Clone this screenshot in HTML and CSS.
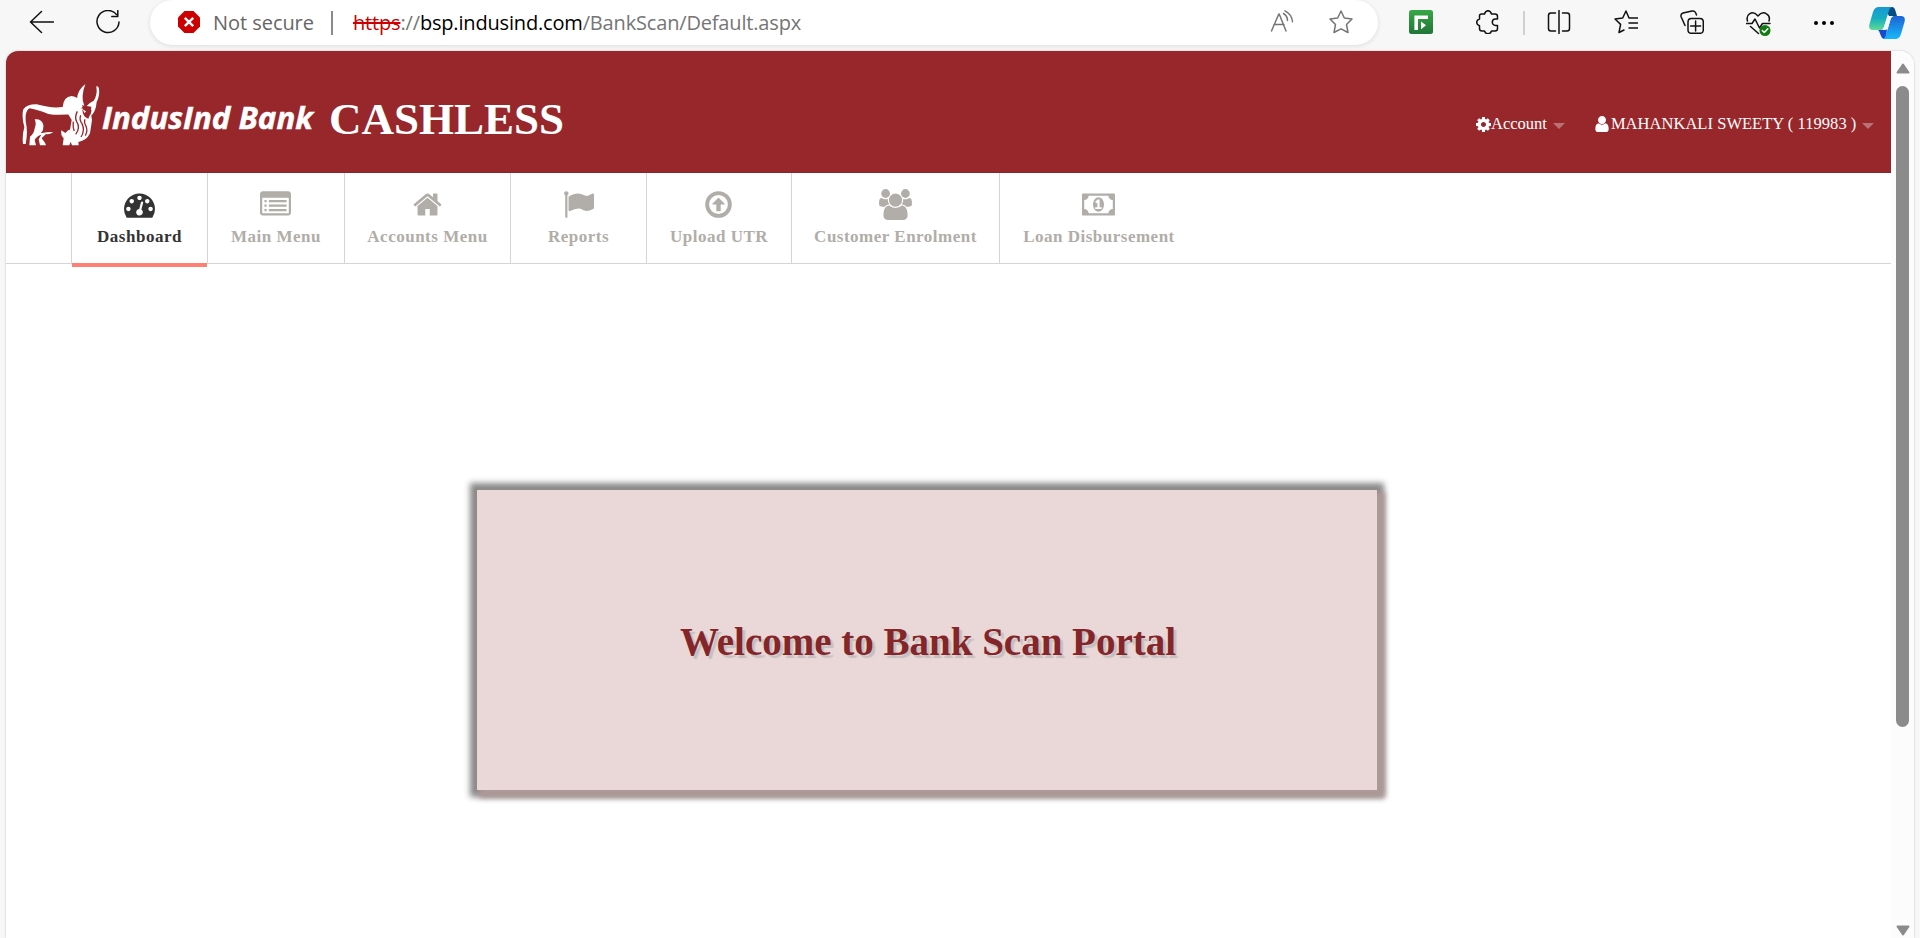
FILE: index.html
```html
<!DOCTYPE html>
<html lang="en">
<head>
<meta charset="utf-8">
<title>Bank Scan Portal</title>
<link rel="stylesheet" href="styles.css">
</head>
<body>
<div class="browser">
  <div class="toolbar">
    <svg class="tool back" viewBox="0 0 24 24"><path d="M12 1.500L1 12l11 10.500M1 12h23"/></svg>
    <svg class="tool reload" viewBox="0 0 24 24"><path d="M20.500 4.500A11 11 0 1 0 23 12M21.800.500v6h-6"/></svg>
    <div class="address">
      <svg class="warning" viewBox="0 0 22 22"><path fill="#c00" d="M6.500 0h9L22 6.500v9L15.500 22h-9L0 15.500v-9z"/><path stroke="#fff" stroke-width="2.400" d="M6.800 6.800l8.400 8.400m0-8.400l-8.400 8.400"/></svg>
      <span class="insecure">Not secure</span>
      <span class="address-rule"></span>
      <span class="url"><span class="scheme">https</span>://<span class="host">bsp.indusind.com</span>/BankScan/Default.aspx</span>
      <svg class="tool grey read" viewBox="0 0 24 24"><path d="M1.500 21L8.800 4h.400L16 21M4 14.500h10M13.500 3.500q4 2.500 4 7M15 .800q7 3.500 7.500 11"/></svg>
      <svg class="tool grey star" viewBox="0 0 24 24"><path d="M12 1l3.300 7 7.700 1-5.500 5.500L19 22.500l-7-3.700-7 3.700 1.500-8L1 9l7.700-1z"/></svg>
    </div>
    <svg class="tool ext" viewBox="0 0 24 24"><defs><linearGradient id="g" x2="0" y2="1"><stop stop-color="#36a846"/><stop offset="1" stop-color="#217538"/></linearGradient></defs><rect width="24" height="24" rx="2.500" fill="url(#g)" stroke="none"/><path d="M7.200 20V7.200H19" stroke="#fff" stroke-width="3.600"/><path d="M12 11.500l5 3.700-5 4z" fill="#fff" stroke="none"/></svg>
    <svg class="tool puzzle" viewBox="0 0 24 24"><path d="M5.500 4H8.500q1-3.300 3.500-3.300T15.500 4H19q2.500 0 2.500 2.500V9h-2a3.200 3.200 0 0 0 0 6.400h2V18.500q0 2.500-2.500 2.500H15.500q-1 2.800-3.500 2.800T8.500 21H6q-2.500 0-2.500-2.500V15.800Q.700 15 .700 12.300T3.500 9V6q0-2 2-2z"/></svg>
    <span class="tool-rule"></span>
    <svg class="tool split" viewBox="0 0 24 24"><path d="M8.500 3H4Q1.500 3 1.500 5.500v13Q1.500 21 4 21h4.500M12 .500v23M15.500 3H20q2.500 0 2.500 2.500v13Q22.500 21 20 21h-4.500"/></svg>
    <svg class="tool favs" viewBox="0 0 24 24"><path d="M15 8L12 1 8.700 8 1 9l5.600 5.400L5 22.500l5-2.500M15 8h9M15 13h9M15 18h9"/></svg>
    <svg class="tool coll" viewBox="0 0 24 24"><path d="M5 15.500L1 6.500Q.500 4 3 3l9-2q2.500-.500 3.500 1.500l1 2.500M8 12q0-3.500 3.500-3.500h8.500q3.300 0 3.300 3.500v8q0 3.300-3.300 3.300h-8.500Q8 23.300 8 20zM15.600 11v10M10.600 16h10"/></svg>
    <svg class="tool heart" viewBox="0 0 25 25"><path d="M1.500 10Q0 5 3.500 2.800 8 0 12 5q4-5 8.500-2.200Q24.500 5 23 10M0 12.500h6l3-4.500 4.500 9 3-4.500H24M4.500 15.500l8 7"/><circle cx="19" cy="19.500" r="5.500" fill="#107c10" stroke="none"/><path stroke="#fff" d="M16.300 19.500l2 2 3.500-3.700"/></svg>
    <svg class="tool dots" viewBox="0 0 24 24"><g fill="#000" stroke="none"><circle cx="4" cy="12" r="2"/><circle cx="12" cy="12" r="2"/><circle cx="20" cy="12" r="2"/></g></svg>
    <svg class="copilot" viewBox="0 0 36 32"><defs><linearGradient id="c1" x2="0" y2="1"><stop stop-color="#1797d4"/><stop offset=".5" stop-color="#16afc2"/><stop offset="1" stop-color="#61d995"/></linearGradient><linearGradient id="c2" x2="0" y2="1"><stop stop-color="#1d62d3"/><stop offset="1" stop-color="#18b8fa"/></linearGradient></defs><path fill="#064c84" d="M15 0h8q2.500 0 3.500 4l1.500 5h-8z"/><path fill="#164bcd" d="M8 22h10l-1 10h-2q-2 0-3-3l-2-5z"/><path fill="url(#c1)" d="M10 0h13q-2.500 1-3.500 5l-4.500 15q-1 3-4 3H4q-5 0-3.500-6L4 5q1.500-5 6-5z"/><path fill="url(#c2)" d="M25 9h7q5 0 3.500 6L32 27q-1.500 5-5.500 5H14q2-1 3-4l4.500-15.500Q22.500 9 25 9z"/><path fill="#f7f7f7" d="M18.500 9H25q-2.500 0-3.500 3.500L19 21q-.700 2-3 2h-5q3 0 4-3z"/></svg>
  </div>

  <div class="window">
    <div class="page">
      <header class="header">
        <svg class="logo" viewBox="0 0 300 66" role="img" aria-label="IndusInd Bank">
          <g transform="translate(-12 -13) scale(.33333)">
            <g fill="#fff">
              <path d="M39 222Q36 195 43 172 34 138 40 118 52 102 80 103 125 116 158 111 160 80 185 78q20 4 27 17l6 15-18 20q-50 8-85 2Q80 118 58 115 43 125 48 160q6 25-1 62z"/>
              <path d="M74 148q22-2 26 17 2 15-8 25 18-4 38-4-8 8-22 6l-13 13 10 13 3 8H90l-4-18 8-14q-14 4-20 16l4 16H58l2-26q12-8 14-25 6-15 0-27z"/>
              <path d="M154 181l12 8q9-11 14-10l5-29-12-20 42-15q31 10 31 35-2 15-6 40-10 22-35 26l1 10h-20l-4-11-4 11h-20l3-21q-10-10-7-24z"/>
              <path d="M226 42Q203 60 201 86q5 19 22 21Q211 82 226 42z"/>
              <path d="M259 49q4 27-8 43-13 6-21 16l14 2-3 30q17-15 19-44 10-20 7-40-2-9-8-7z"/>
            </g>
            <path fill="#97272b" d="M217 119q20-9 28 3l-10 24q-17-6-18-27z"/>
            <path fill="#fff" d="M219 120q7 0 9 5l-5 4z"/>
            <path fill="none" stroke="#97272b" stroke-width="4" d="M202 124q-9 18-2 31 12 19-3 38M212 136q-5 14 4 25 10 20-3 40M225 148q-4 8 3 20 6 15-2 29M190 155q-2 18 3 28"/>
          </g>
          <text class="wordmark" x="80" y="45.500" textLength="211" lengthAdjust="spacingAndGlyphs">IndusInd Bank</text>
        </svg>
        <h1 class="product">CASHLESS</h1>
        <div class="account">
          <svg class="fa" viewBox="128 128 1536 1536"><path d="M1152 896q0-106-75-181t-181-75-181 75-75 181 75 181 181 75 181-75 75-181zm512-109v222q0 12-8 23t-20 13l-185 28q-19 54-39 91 35 50 107 138 10 12 10 25t-9 23q-27 37-99 108t-94 71q-12 0-26-9l-138-108q-44 23-91 38-16 136-29 186-7 28-36 28h-222q-14 0-24.500-8.500t-11.500-21.500l-28-184q-49-16-90-37l-141 107q-10 9-25 9-14 0-25-11-126-114-165-168-7-10-7-23 0-12 8-23 15-21 51-66.500t54-70.500q-27-50-41-99l-183-27q-13-2-21-12.500t-8-23.500v-222q0-12 8-23t19-13l186-28q14-46 39-92-40-57-107-138-10-12-10-24 0-10 9-23 26-36 98.500-107.500t94.500-71.500q13 0 26 10l138 107q44-23 91-38 16-136 29-186 7-28 36-28h222q14 0 24.500 8.500t11.500 21.500l28 184q49 16 90 37l142-107q9-9 24-9 13 0 25 10 129 119 165 170 7 8 7 22 0 12-8 23-15 21-51 66.500t-54 70.500q26 50 41 98l183 28q13 2 21 12.500t8 23.500z"/></svg>
          <span>Account</span><i class="caret"></i>
        </div>
        <div class="user">
          <svg class="fa person" viewBox="256 128 1280 1536"><path d="M1536 1399q0 109-62.500 187t-150.500 78h-854q-88 0-150.500-78t-62.500-187q0-85 8.500-160.500t31.500-152 58.500-131 94-89 134.500-34.500q131 128 313 128t313-128q76 0 134.500 34.500t94 89 58.500 131 31.500 152 8.500 160.500zm-256-887q0 159-112.500 271.500t-271.500 112.500-271.500-112.500-112.500-271.500 112.500-271.500 271.500-112.500 271.500 112.500 112.500 271.500z"/></svg>
          <span>MAHANKALI SWEETY ( 119983 )</span><i class="caret"></i>
        </div>
      </header>

      <nav class="nav">
        <a class="item dashboard active"><svg viewBox="0 0 1792 1792"><path d="M384 1152q0-53-37.500-90.500t-90.500-37.500-90.500 37.500-37.500 90.500 37.500 90.500 90.500 37.500 90.500-37.500 37.500-90.500zm192-448q0-53-37.500-90.500t-90.500-37.500-90.500 37.500-37.500 90.500 37.500 90.500 90.500 37.500 90.500-37.500 37.500-90.500zm428 481l101-382q6-26-7.500-48.500t-38.500-29.500-48 6.500-30 39.500l-101 382q-60 5-107 43.500t-63 98.500q-20 77 20 146t117 89 146-20 89-117q16-60-6-117t-72-91zm660-33q0-53-37.500-90.500t-90.500-37.500-90.500 37.500-37.500 90.500 37.500 90.500 90.500 37.500 90.500-37.500 37.500-90.500zm-640-640q0-53-37.500-90.500t-90.500-37.500-90.500 37.500-37.500 90.500 37.500 90.500 90.500 37.500 90.500-37.500 37.500-90.500zm448 192q0-53-37.500-90.500t-90.500-37.500-90.500 37.500-37.500 90.500 37.500 90.500 90.500 37.500 90.500-37.500 37.500-90.500zm320 448q0 261-141 483-19 29-54 29h-1402q-35 0-54-29-141-221-141-483 0-182 71-348t191-286 286-191 348-71 348 71 286 191 191 286 71 348z"/></svg><span>Dashboard</span></a>
        <a class="item main"><svg viewBox="0 0 1792 1792"><path fill-rule="evenodd" d="M160 128h1472q66 0 113 47t47 113v1088q0 66-47 113t-113 47H160q-66 0-113-47T0 1376V288q0-66 47-113t113-47zm0 384q-32 0-32 32v832q0 32 32 32h1472q32 0 32-32V544q0-32-32-32z"/><path d="M256 640h128v128H256zM256 896h128v128H256zM256 1152h128v128H256zM512 640h1024v128H512zM512 896h1024v128H512zM512 1152h1024v128H512z"/></svg><span>Main Menu</span></a>
        <a class="item accounts"><svg viewBox="0 0 1792 1792"><path d="M1472 992v480q0 26-19 45t-45 19h-384v-384h-256v384h-384q-26 0-45-19t-19-45v-480q0-1 .5-3t.5-3l575-474 575 474q1 2 1 6zm223-69l-62 74q-8 9-21 11h-3q-13 0-21-7l-692-577-692 577q-12 8-24 7-13-2-21-11l-62-74q-8-10-7-23.500t11-21.500l719-599q32-26 76-26t76 26l244 204v-195q0-14 9-23t23-9h192q14 0 23 9t9 23v408l219 182q10 8 11 21.500t-7 23.500z"/></svg><span>Accounts Menu</span></a>
        <a class="item reports"><svg viewBox="0 0 1792 1792"><path d="M320 256q0 72-64 110v1266q0 13-9.500 22.500t-22.500 9.500h-64q-13 0-22.500-9.500t-9.500-22.500v-1266q-64-38-64-110 0-53 37.500-90.500t90.500-37.500 90.500 37.500 37.500 90.500zm1472 64v763q0 25-12.500 38.500t-39.500 27.500q-215 116-369 116-61 0-123.500-22t-108.500-48-115.500-48-142.500-22q-192 0-464 146-17 9-33 9-26 0-45-19t-19-45v-742q0-32 31-55 21-14 79-43 236-120 421-120 107 0 200 29t219 88q38 19 88 19 54 0 117.500-21t110-47 88-47 54.500-21q26 0 45 19t19 45z"/></svg><span>Reports</span></a>
        <a class="item upload"><svg viewBox="0 0 1792 1792"><path fill-rule="evenodd" d="M896 128a768 768 0 1 1 0 1536 768 768 0 0 1 0-1536zm0 224a544 544 0 1 0 0 1088 544 544 0 0 0 0-1088z"/><path d="M896 510q14 0 24 10l320 320q15 17 8 35t-30 21h-194v352q0 32-32 32H800q-32 0-32-32V896H576q-23-2-31-20t7-35l320-321q10-10 24-10z"/></svg><span>Upload UTR</span></a>
        <a class="item customer"><svg class="wide" viewBox="64 0 1920 1792"><path d="M657 896q-162 5-265 128h-134q-82 0-138-40.500t-56-118.500q0-353 124-353 6 0 43.500 21t97.500 42.500 119 21.500q67 0 133-23-5 37-5 66 0 139 81 256zm1071 637q0 120-73 189.500t-194 69.500h-874q-121 0-194-69.500t-73-189.500q0-53 3.500-103.500t14-109 26.500-108.500 43-97.500 62-81 85.500-53.500 111.500-20q10 0 43 21.500t73 48 107 48 135 21.500 135-21.500 107-48 73-48 43-21.500q61 0 111.500 20t85.500 53.500 62 81 43 97.500 26.500 108.500 14 109 3.500 103.500zm-1024-1277q0 106-75 181t-181 75-181-75-75-181 75-181 181-75 181 75 75 181zm704 384q0 159-112.500 271.500t-271.500 112.500-271.500-112.500-112.500-271.500 112.500-271.500 271.500-112.500 271.500 112.500 112.500 271.500zm576 225q0 78-56 118.500t-138 40.500h-134q-103-123-265-128 81-117 81-256 0-29-5-66 66 23 133 23 59 0 119-21.500t97.500-42.500 43.500-21q124 0 124 353zm-128-609q0 106-75 181t-181 75-181-75-75-181 75-181 181-75 181 75 75 181z"/></svg><span>Customer Enrolment</span></a>
        <a class="item loan"><svg class="wide" viewBox="0 0 1920 1792"><path d="M768 1152h384v-96h-128v-448h-114l-148 137 77 80q42-37 55-57h2v288h-128v96zm512-256q0 70-21 142t-59.500 134-101.500 101-138 39-138-39-101.500-101-59.500-134-21-142 21-142 59.500-134 101.500-101 138-39 138 39 101.500 101 59.500 134 21 142zm512 256v-512q-106 0-181-75t-75-181h-1152q0 106-75 181t-181 75v512q106 0 181 75t75 181h1152q0-106 75-181t181-75zm128-832v1152q0 26-19 45t-45 19h-1792q-26 0-45-19t-19-45v-1152q0-26 19-45t45-19h1792q26 0 45 19t19 45z"/></svg><span>Loan Disbursement</span></a>
      </nav>

      <main class="content">
        <section class="welcome"><h2>Welcome to Bank Scan Portal</h2></section>
      </main>
    </div>
    <div class="scrollbar">
      <svg class="arrow" viewBox="0 0 14 11"><path d="M7 1.500L12.500 9.500h-11z"/></svg>
      <div class="thumb"></div>
      <svg class="arrow down" viewBox="0 0 14 11"><path d="M7 9.500L1.500 1.500h11z"/></svg>
    </div>
  </div>
</div>
</body>
</html>
```
FILE: styles.css
```css
* { box-sizing: border-box; }
body { margin: 0; overflow: hidden; font-family: "Liberation Serif", "Times New Roman", serif; }
svg { display: block; flex: none; }
.browser { width: 1920px; height: 938px; background: #f7f7f7; display: flex; flex-direction: column; overflow: hidden; }

/* Browser toolbar */
.toolbar { height: 51px; flex: none; display: flex; align-items: flex-start; padding-left: 29px; }
.tool { width: 24px; height: 24px; margin-top: 10px; fill: none; stroke: #111; stroke-width: 1.500; stroke-linecap: round; stroke-linejoin: round; }
.back { width: 25px; }
.reload { margin-left: 42px; }
.grey { stroke: #757575; }
.address { width: 1228px; height: 45px; margin-left: 30px; padding-left: 28px; background: #fff; border-radius: 23px; display: flex; align-items: flex-start; box-shadow: 0 1px 5px #0000001c; font: 20px/45px "Open Sans", "Noto Sans", sans-serif; white-space: nowrap; }
.address > * { flex: none; }
.warning { width: 22px; height: 22px; margin-top: 11px; }
.insecure { width: 130px; padding-left: 13px; color: #666; letter-spacing: -.050px; }
.address-rule { width: 2px; height: 24px; margin: 11px 20px 0 1px; background: #8a8a8a; }
.url { width: 917px; color: #757575; letter-spacing: -.170px; }
.scheme { color: #c00; text-decoration: line-through; }
.host { color: #000; }
.star { margin-left: 35px; }
.ext { margin-left: 31px; stroke-linecap: butt; stroke-linejoin: miter; }
.puzzle { margin-left: 43px; }
.tool-rule { width: 2px; height: 24px; margin: 11px 0 0 23px; background: #d0d0d0; }
.split { margin-left: 22px; }
.favs { margin-left: 43px; }
.coll { margin-left: 42px; }
.heart { margin-left: 42px; width: 25px; height: 25px; margin-top: 11px; }
.dots { margin-left: 41px; margin-top: 11px; }
.copilot { width: 36px; height: 32px; margin: 7px 0 0 33px; }

/* Web view */
.window { flex: 1; width: 1908px; margin-left: 6px; display: flex; background: #fff; border-radius: 12px 14px 0 0; overflow: hidden; box-shadow: 0 0 2px #0004; }
.page { width: 1885px; display: flex; flex-direction: column; }
.header { height: 122px; flex: none; background: #97272b; border-bottom: 1px solid #84262a; display: flex; color: #fff; }
.logo { width: 300px; height: 66px; margin: 32px 0 0 16px; }
.wordmark { font: italic 700 30.500px "Open Sans", "Noto Sans", sans-serif; fill: #fff; stroke: #fff; stroke-width: .500px; }
.product { margin: 42px 0 0 7px; width: 1147px; font-size: 45px; line-height: 52px; font-weight: bold; }
.account, .user { height: 24px; margin-top: 61px; display: flex; align-items: center; font-size: 16.500px; line-height: 24px; white-space: nowrap; }
.user { margin-left: 30px; }
.fa { width: 15px; height: 15px; fill: #fff; }
.person { width: 14px; height: 16px; margin-right: 2px; }
.user span { letter-spacing: .040px; }
.caret { border: 6px solid transparent; border-top-color: #b97174; border-bottom: 0; margin: 3px 0 0 6px; }

.nav { height: 91px; flex: none; padding-left: 65px; border-bottom: 1px solid #d5d5d5; display: flex; }
.item { height: 90px; border-left: 1px solid #d5d5d5; padding-top: 16px; display: flex; flex-direction: column; align-items: center; color: #b1ada8; font-size: 17px; letter-spacing: .500px; font-weight: bold; line-height: 24px; white-space: nowrap; }
.item svg { width: 31px; height: 31px; margin: 0 1px 5px 0; fill: currentColor; }
.item svg.wide { width: 33px; }
.item.active { position: relative; color: #333; }
.item.active::after { content: ""; position: absolute; left: 0; right: 0; top: 90px; height: 4px; background: #ff7f74; }
.dashboard { width: 136px; }
.main { width: 137px; }
.accounts { width: 166px; }
.reports { width: 136px; }
.upload { width: 145px; }
.customer { width: 208px; }
.loan { width: 199px; }

.content { flex: 1; padding: 226px 0 0 471px; }
.welcome { width: 900px; height: 300px; background: #e9d8d7; display: flex; justify-content: center; box-shadow: 5px 5px 5px 3px #ad9998, 0 0 6px 7px #888; }
.welcome h2 { margin: 129px 0 0 2px; font-size: 39px; line-height: 46px; color: #842529; text-shadow: 3px 3px 1px #c5bfc0; }

.scrollbar { width: 23px; background: #fcfcfc; display: flex; flex-direction: column; align-items: center; padding-top: 12px; }
.arrow { width: 14px; height: 11px; fill: #8b8b8b; stroke: #8b8b8b; stroke-width: 2; stroke-linejoin: round; }
.thumb { width: 13px; height: 641px; margin-top: 12px; border-radius: 7px; background: #8b8b8b; }
.down { margin-top: 198px; }
```
